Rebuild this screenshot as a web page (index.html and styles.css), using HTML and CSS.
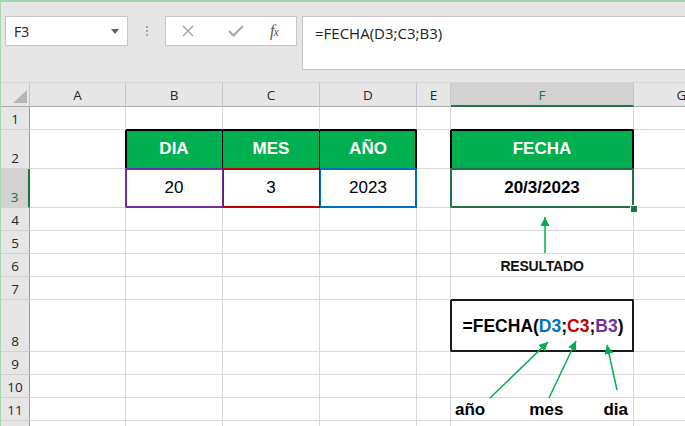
FILE: index.html
```html
<!DOCTYPE html>
<html lang="es">
<head>
<meta charset="utf-8">
<title>FECHA</title>
<link rel="stylesheet" href="styles.css">
</head>
<body>
<div class="app">
  <div class="fbar">
    <div class="namebox"><span>F3</span><span class="nb-caret"></span></div>
    <div class="grip"><i></i><i></i><i></i></div>
    <div class="fxbox">
      <svg class="ic-x" width="12" height="12" viewBox="0 0 12 12"><path d="M1 1 L11 11 M11 1 L1 11" stroke="#a3a3a3" stroke-width="1.4" fill="none"/></svg>
      <svg class="ic-ok" width="16" height="12" viewBox="0 0 16 12"><path d="M1 6 L5.5 10.5 L15 1" stroke="#a8a8a8" stroke-width="2" fill="none"/></svg>
      <span class="fx">f<span class="fx-x">x</span></span>
    </div>
    <div class="finput">=FECHA(D3;C3;B3)</div>
  </div>

  <div class="sheet">
    <div class="corner"><span class="tri"></span></div>
    <div class="ch">A</div><div class="ch">B</div><div class="ch">C</div><div class="ch">D</div><div class="ch">E</div><div class="ch sel">F</div><div class="ch">G</div>

    <div class="rh">1</div>
    <div class="c"></div><div class="c bb-k"></div><div class="c bb-k"></div><div class="c bb-k"></div><div class="c"></div><div class="c bb-k"></div><div class="c"></div>

    <div class="rh">2</div>
    <div class="c br-k"></div>
    <div class="c hd b2">DIA</div>
    <div class="c hd c2">MES</div>
    <div class="c hd d2">AÑO</div>
    <div class="c br-k"></div>
    <div class="c hd f2">FECHA</div>
    <div class="c"></div>

    <div class="rh sel">3</div>
    <div class="c br-p"></div>
    <div class="c val b3">20</div>
    <div class="c val c3">3</div>
    <div class="c val d3">2023</div>
    <div class="c br-g"></div>
    <div class="c val strong f3">20/3/2023</div>
    <div class="c"></div>

    <div class="rh">4</div>
    <div class="c"></div><div class="c"></div><div class="c"></div><div class="c"></div><div class="c"></div><div class="c"></div><div class="c"></div>

    <div class="rh">5</div>
    <div class="c"></div><div class="c"></div><div class="c"></div><div class="c"></div><div class="c"></div><div class="c"></div><div class="c"></div>

    <div class="rh">6</div>
    <div class="c"></div><div class="c"></div><div class="c"></div><div class="c"></div><div class="c"></div>
    <div class="c res">RESULTADO</div>
    <div class="c"></div>

    <div class="rh">7</div>
    <div class="c"></div><div class="c"></div><div class="c"></div><div class="c"></div><div class="c"></div><div class="c bb-d"></div><div class="c"></div>

    <div class="rh">8</div>
    <div class="c"></div><div class="c"></div><div class="c"></div><div class="c"></div><div class="c br-d"></div>
    <div class="c formula">=FECHA(<span class="t-blue">D3</span>;<span class="t-red">C3</span>;<span class="t-purple">B3</span>)</div>
    <div class="c"></div>

    <div class="rh">9</div>
    <div class="c"></div><div class="c"></div><div class="c"></div><div class="c"></div><div class="c"></div><div class="c"></div><div class="c"></div>

    <div class="rh">10</div>
    <div class="c"></div><div class="c"></div><div class="c"></div><div class="c"></div><div class="c"></div><div class="c"></div><div class="c"></div>

    <div class="rh">11</div>
    <div class="c"></div><div class="c"></div><div class="c"></div><div class="c"></div><div class="c"></div>
    <div class="c labels"><span>año</span><span class="lb-mes">mes</span><span>dia</span></div>
    <div class="c"></div>

    <div class="rh"></div>
    <div class="c"></div><div class="c"></div><div class="c"></div><div class="c"></div><div class="c"></div><div class="c"></div><div class="c"></div>
  </div>

  <svg class="overlay" width="685" height="426" viewBox="0 0 685 426">
    <defs>
      <marker id="ah" viewBox="0 0 10 10" refX="10" refY="5" markerWidth="9" markerHeight="9" markerUnits="userSpaceOnUse" orient="auto">
        <path d="M0 0 L10 5 L0 10 Z" fill="#00b050"/>
      </marker>
    </defs>
    <rect x="630.5" y="205.5" width="7" height="7" fill="#217346" stroke="#ffffff" stroke-width="1"/>
    <line x1="545" y1="253" x2="545" y2="217" stroke="#00b050" stroke-width="1.5" marker-end="url(#ah)"/>
    <line x1="490" y1="398" x2="548" y2="342" stroke="#00b050" stroke-width="1.5" marker-end="url(#ah)"/>
    <line x1="549" y1="398" x2="576" y2="341" stroke="#00b050" stroke-width="1.5" marker-end="url(#ah)"/>
    <line x1="617" y1="390" x2="607" y2="345" stroke="#00b050" stroke-width="1.5" marker-end="url(#ah)"/>
  </svg>
</div>
</body>
</html>
```

FILE: styles.css
```css
* { box-sizing: border-box; }
html, body { margin: 0; padding: 0; }
body {
  width: 685px;
  height: 426px;
  overflow: hidden;
  background: #ffffff;
  font-family: "Liberation Sans", Arial, sans-serif;
}
.app {
  position: relative;
  width: 685px;
  height: 426px;
  overflow: hidden;
  border-left: 1px solid #a9d5b3;
}

/* formula bar */
.fbar {
  height: 83px;
  background: #e6e6e6;
  border-top: 2px solid #a3d6ad;
  border-bottom: 1px solid #d6d6d6;
  display: flex;
  align-items: flex-start;
  padding: 14px 0 0 4px;
}
.namebox {
  width: 123px;
  height: 30px;
  background: #ffffff;
  border: 1px solid #c6c6c6;
  display: flex;
  align-items: center;
  padding-left: 8px;
  font: 14px "Open Sans", sans-serif;
  color: #222222;
}
.nb-caret {
  margin-left: auto;
  margin-right: 8px;
  width: 0;
  height: 0;
  border-left: 4px solid transparent;
  border-right: 4px solid transparent;
  border-top: 5px solid #5f5f5f;
}
.grip {
  width: 37px;
  height: 30px;
  display: flex;
  flex-direction: column;
  align-items: center;
  justify-content: center;
  gap: 2px;
}
.grip i {
  display: block;
  width: 2px;
  height: 2px;
  background: #a6a6a6;
}
.fxbox {
  width: 132px;
  height: 30px;
  background: #ffffff;
  border: 1px solid #c6c6c6;
  display: flex;
  align-items: center;
  padding-left: 16px;
}
.ic-x { display: block; }
.ic-ok { display: block; margin-left: 34px; }
.fx {
  margin-left: 26px;
  font: italic 16px "Liberation Serif", serif;
  color: #5a5a5a;
  letter-spacing: -1px;
}
.fx-x { font-size: 12px; }
.finput {
  flex: 1;
  height: 54px;
  margin-left: 5px;
  margin-right: -4px;
  background: #ffffff;
  border: 1px solid #c6c6c6;
  border-right: none;
  padding: 6px 0 0 12px;
  font: 15px/20px "Open Sans", sans-serif;
  color: #222222;
}

/* sheet */
.sheet {
  display: grid;
  grid-template-columns: 29px 96px 97px 97px 97px 34px 183px 96px;
  grid-template-rows: 24px 23px 39px 39px 23px 23px 23px 23px 52px 23px 23px 23px 10px;
}
.corner {
  background: #e6e6e6;
  border-right: 1px solid #c3c3c3;
  border-bottom: 1px solid #ababab;
  display: flex;
  justify-content: flex-end;
  align-items: flex-end;
  padding: 0 2px 3px 0;
}
.tri {
  width: 0;
  height: 0;
  border-left: 14px solid transparent;
  border-bottom: 13px solid #b5b5b5;
}
.ch {
  background: #e6e6e6;
  border-right: 1px solid #c6c6c6;
  border-bottom: 1px solid #ababab;
  display: flex;
  align-items: center;
  justify-content: center;
  font: 13.5px "Open Sans", sans-serif;
  color: #262626;
  padding-top: 1px;
}
.ch.sel {
  background: #d2d2d2;
  border-bottom: 2px solid #217346;
  color: #217346;
}
.rh {
  background: #e6e6e6;
  border-right: 1px solid #9e9e9e;
  border-bottom: 1px solid #d0d0d0;
  display: flex;
  align-items: flex-end;
  justify-content: center;
  font: 13.5px/16px "Open Sans", sans-serif;
  color: #262626;
  padding-bottom: 2px;
}
.rh.sel {
  background: #d2d2d2;
  border-right: 2px solid #217346;
  color: #217346;
}
.c {
  border-right: 1px solid #d9d9d9;
  border-bottom: 1px solid #d9d9d9;
  display: flex;
  align-items: center;
  justify-content: center;
  color: #000000;
  white-space: nowrap;
}

/* border helpers */
.bb-k { border-bottom-color: #000000; }
.br-k { border-right-color: #000000; }
.br-p { border-right-color: #7030a0; }
.br-g { border-right-color: #217346; }
.bb-d { border-bottom-color: #1a1a1a; }
.br-d { border-right-color: #1a1a1a; }

/* table headers */
.hd {
  background: #00b050;
  color: #ffffff;
  font-weight: bold;
  font-size: 17px;
}
.b2 { border-right-color: #000000; border-bottom-color: #7030a0; box-shadow: inset 1px 1px 0 #000000; }
.c2 { border-right-color: #000000; border-bottom-color: #c00000; box-shadow: inset 0 1px 0 #000000; }
.d2 { border-right-color: #000000; border-bottom-color: #0070c0; box-shadow: inset 0 1px 0 #000000, inset -1px 0 0 #000000; }
.f2 { border-right-color: #000000; border-bottom-color: #217346; box-shadow: inset 1px 1px 0 #000000, inset -1px 0 0 #000000; }

/* values */
.val { font-size: 17px; }
.strong { font-weight: bold; }
.b3 { border-right-color: #7030a0; border-bottom-color: #7030a0; box-shadow: inset 1px 1px 0 #7030a0, inset 0 -1px 0 #7030a0; }
.c3 { border-right-color: #c00000; border-bottom-color: #c00000; box-shadow: inset 1px 1px 0 #c00000, inset 0 -1px 0 #c00000; }
.d3 { border-right-color: #0070c0; border-bottom-color: #0070c0; box-shadow: inset 1px 1px 0 #0070c0, inset -1px -1px 0 #0070c0; }
.f3 { border-right-color: #217346; border-bottom-color: #217346; box-shadow: inset 1px 1px 0 #217346, inset -1px -1px 0 #217346; }

.res {
  font-weight: bold;
  font-size: 14px;
  letter-spacing: -0.2px;
  color: #111111;
  padding-top: 1px;
}
.formula {
  border-right-color: #1a1a1a;
  border-bottom-color: #1a1a1a;
  box-shadow: inset 1px 1px 0 #1a1a1a, inset -1px -1px 0 #1a1a1a;
  font-weight: bold;
  font-size: 17.5px;
  padding-left: 2px;
  padding-top: 2px;
}
.t-blue { color: #0070c0; }
.t-red { color: #c00000; }
.t-purple { color: #7030a0; }
.labels {
  justify-content: space-between;
  padding: 0 5px 0 4px;
  font-weight: bold;
  font-size: 17px;
  align-items: flex-end;
  overflow: visible;
}
.lb-mes { margin-left: 4px; }

.overlay {
  position: absolute;
  top: 0;
  left: -1px;
  pointer-events: none;
}
```
